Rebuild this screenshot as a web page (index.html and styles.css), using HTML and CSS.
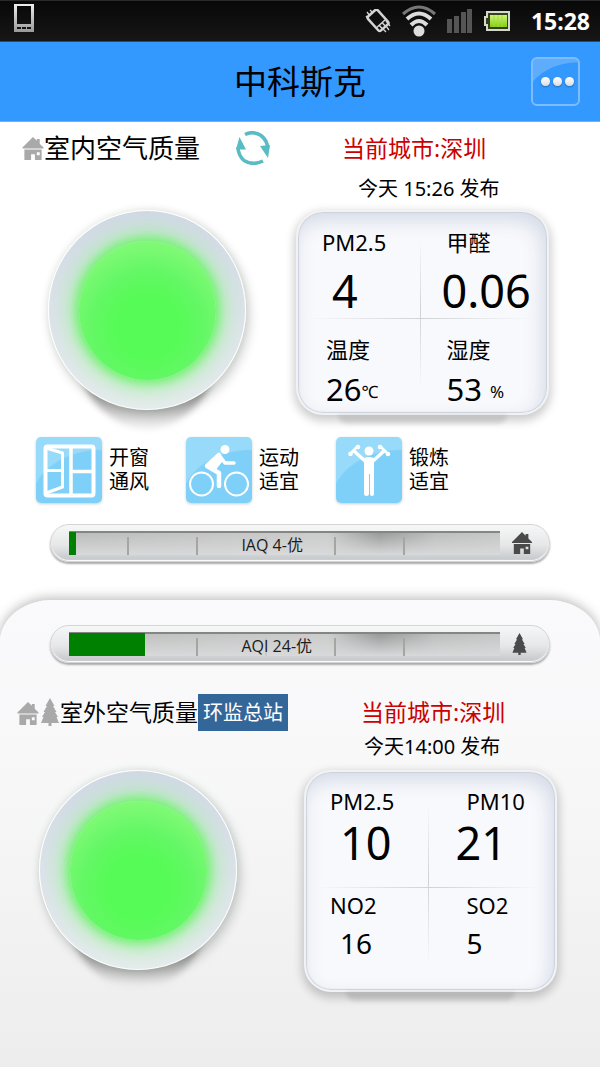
FILE: index.html
```html
<!DOCTYPE html>
<html lang="zh-CN">
<head>
<meta charset="utf-8">
<meta name="viewport" content="width=device-width, initial-scale=1">
<title>中科斯克</title>
<link rel="stylesheet" href="styles.css">
</head>
<body>
<svg class="defs" aria-hidden="true">
  <defs>
    <symbol id="house" viewBox="0 0 22 24">
      <path d="M11 0 15 4V2h3v5l4 4v1H0v-1zM2 13h18v11h-7v-6H9v6H2zM15 16v3h3v-3z" fill-rule="evenodd"/>
    </symbol>
    <symbol id="tree" viewBox="0 0 18 28">
      <path d="M9 0 13.500 8H12l3.500 6H14l3 5h-1.500L18 25h-7.500v3h-3v-3H0l2.500-6H1l3-5H2.500L6 8H4.500z"/>
    </symbol>
    <linearGradient id="silver" x1="0" y1="0" x2="0" y2="1">
      <stop offset="0" stop-color="#eee"/><stop offset="1" stop-color="#999"/>
    </linearGradient>
    <linearGradient id="lime" x1="0" y1="0" x2="0" y2="1">
      <stop offset="0" stop-color="#cdf37a"/><stop offset="1" stop-color="#83cd10"/>
    </linearGradient>
  </defs>
</svg>

<div class="status">
  <svg class="status-phone" width="20" height="28" viewBox="0 0 20 28"><path d="M0 0h20v28H0zM3 2v18h14V2zM3 23v2h4v-2zM8 23v2h4v-2zM13 23v2h4v-2z" fill="url(#silver)" fill-rule="evenodd"/></svg>
  <div class="status-right">
    <svg width="26" height="24" viewBox="0 0 26 24" fill="none" stroke="#d4d4d4"><g transform="rotate(-42 13 12)"><rect x="7" y="2" width="13" height="19" rx="2" stroke-width="2.500"/><path d="M7 16h13M11 16v5M15 16v5" stroke-width="1.500"/></g><path d="M1 7l4 5M2 3l3 4M5 1l3 3M25 17l-4-5M24 21l-3-4M21 23l-3-3" stroke-width="1.300"/></svg>
    <svg width="34" height="32" viewBox="0 0 34 32" fill="none" stroke-width="4"><path d="M1 9Q17-5 33 9" stroke="#777" stroke-width="3"/><path d="M5 14Q17 3 29 14" stroke="#ddd"/><path d="M9 20Q17 12 25 20" stroke="#ddd"/><circle cx="17" cy="26" r="5.500" fill="#ddd"/></svg>
    <svg width="26" height="24" viewBox="0 0 26 24" fill="#555"><path d="M0 10h5v14H0zM7 7h5v17H7zM14 3h5v21h-5zM20 0h5v24h-5z"/></svg>
    <svg width="26" height="20" viewBox="0 0 26 20"><path d="M0 5h2V0h24v20H2v-5H0z" fill="#d4d8cc"/><path d="M2 7h2V2h20v16H4v-5H2z" fill="#34401c"/><path d="M6 4h17v12H6z" fill="url(#lime)"/><path d="M10 4v12M14 4v12M18 4v12" stroke="#9fdc3c"/></svg>
    <time class="clock">15:28</time>
  </div>
</div>

<header class="bar">
  <h1 class="bar-title">中科斯克</h1>
  <button class="more" type="button" aria-label="更多"><span class="dot"></span><span class="dot"></span><span class="dot"></span></button>
</header>

<main>
  <section class="indoor">
    <div class="station">
      <div class="heading">
        <svg class="house" fill="#a9a9a9"><use href="#house"/></svg>
        <h2 class="heading-text">室内空气质量</h2>
        <button class="refresh" type="button" aria-label="刷新">
          <svg width="34" height="34" viewBox="0 0 34 34"><path d="M9 3.500Q17-.500 25 4.500Q32 10 31.500 18M27 30Q17 35 8 29.500Q2 24 2 16" fill="none" stroke="#58bcc4" stroke-width="3.500"/><path d="M24 15l10-1-2 13zM0 18.500 3.500 6 10 18.500z" fill="#58bcc4"/></svg>
        </button>
      </div>
      <p class="city">当前城市:深圳</p>
      <p class="published">今天 15:26 发布</p>
      <div class="dial"><div class="dial-face"><div class="dial-light"></div></div></div>
      <dl class="panel">
        <div class="cell"><dt>PM2.5</dt><dd class="big indent">4</dd></div>
        <div class="cell"><dt>甲醛</dt><dd class="big outdent">0.06</dd></div>
        <div class="cell shift"><dt>温度</dt><dd class="mid">26<small>℃</small></dd></div>
        <div class="cell"><dt>湿度</dt><dd class="mid">53<small class="percent">%</small></dd></div>
      </dl>
    </div>

    <ul class="advice">
      <li class="tip">
        <span class="tile"><svg width="66" height="66" viewBox="0 0 66 66" fill="none" stroke="#fff" stroke-width="4" stroke-linejoin="round"><rect x="9.500" y="9.500" width="48" height="49" rx="2"/><path d="M35 10v48M35 34.500h22" stroke-width="3.500"/><path d="M10 11 26.500 16v34L10 56M10 33.500h16" stroke-width="3"/></svg></span>
        <span>开窗<br>通风</span>
      </li>
      <li class="tip">
        <span class="tile"><svg width="66" height="66" viewBox="0 0 66 66" fill="none" stroke="#fff" stroke-linecap="round" stroke-linejoin="round"><circle cx="15.500" cy="47" r="11.500" stroke-width="2"/><circle cx="50.500" cy="47" r="11.500" stroke-width="2"/><circle cx="39" cy="12.500" r="4.500" fill="#fff" stroke="none"/><path d="M33 18 21 29l12 7v13" stroke-width="4.500"/><path d="M33 18l6 8h9" stroke-width="3.500"/><path d="M33 17 21 28l9 4 7-9z" fill="#fff" stroke-width="1"/></svg></span>
        <span>运动<br>适宜</span>
      </li>
      <li class="tip">
        <span class="tile"><svg width="66" height="66" viewBox="0 0 66 66" fill="#fff" stroke="#fff" stroke-linecap="round"><circle cx="33" cy="14" r="4.500" stroke="none"/><path d="M29 24 18 14M37 24l11-10" stroke-width="3.500" fill="none"/><path d="M14 17l8-8M44 9l8 8" stroke-width="2.500" fill="none"/><g stroke="none"><circle cx="14.500" cy="17" r="2.300"/><circle cx="22" cy="10" r="2.300"/><circle cx="44" cy="10" r="2.300"/><circle cx="52" cy="17" r="2.300"/><path d="M28 21q5-2 10 0v36q0 2-2 2-2 0-2-2V37h-1v20q0 2-2.500 2-2.500 0-2.500-2z"/></g></svg></span>
        <span>锻炼<br>适宜</span>
      </li>
    </ul>

    <div class="gauge">
      <div class="track" role="meter" aria-label="IAQ" aria-valuemin="0" aria-valuemax="250" aria-valuenow="4">
        <i class="tick"></i><i class="tick"></i><i class="tick"></i><i class="tick"></i><i class="tick"></i>
        <div class="fill" style="width:1.7%"></div>
        <span class="reading">IAQ 4-优</span>
      </div>
      <svg class="gauge-icon" fill="#4a4a4a"><use href="#house"/></svg>
    </div>
  </section>

  <section class="outdoor">
    <div class="gauge">
      <div class="track" role="meter" aria-label="AQI" aria-valuemin="0" aria-valuemax="136" aria-valuenow="24">
        <i class="tick"></i><i class="tick"></i><i class="tick"></i><i class="tick"></i><i class="tick"></i>
        <div class="fill" style="width:17.6%"></div>
        <span class="reading">AQI 24-优</span>
      </div>
      <svg class="gauge-icon gauge-tree" fill="#4a4a4a"><use href="#tree"/></svg>
    </div>

    <div class="station">
      <div class="heading">
        <svg class="house low" fill="#a9a9a9"><use href="#house"/></svg>
        <svg class="tree" fill="#a9a9a9"><use href="#tree"/></svg>
        <h2 class="heading-text">室外空气质量</h2>
        <button class="source" type="button">环监总站</button>
      </div>
      <p class="city">当前城市:深圳</p>
      <p class="published">今天14:00 发布</p>
      <div class="dial"><div class="dial-face"><div class="dial-light"></div></div></div>
      <dl class="panel">
        <div class="cell"><dt>PM2.5</dt><dd class="big indent">10</dd></div>
        <div class="cell"><dt>PM10</dt><dd class="big outdent">21</dd></div>
        <div class="cell"><dt>NO2</dt><dd class="mid indent">16</dd></div>
        <div class="cell"><dt>SO2</dt><dd class="mid">5</dd></div>
      </dl>
    </div>
  </section>
</main>
</body>
</html>
```
FILE: styles.css
```css
* { box-sizing: border-box; }
html { min-height: 100%; background: #fff; }
body {
  display: flex;
  flex-direction: column;
  min-height: 100vh;
  margin: 0;
  color: #000;
  font-family: "Noto Sans", "Noto Sans CJK SC", sans-serif;
  font-size: 20px;
}
h1, h2, p, dl, dd, ul { margin: 0; padding: 0; font-weight: 400; }
ul { list-style: none; }
button { padding: 0; border: 0; background: none; color: inherit; font: inherit; }
svg { display: block; flex: none; }
main { display: flex; flex: 1; flex-direction: column; }
.defs { position: absolute; width: 0; height: 0; }

/* system status bar */
.status {
  display: flex;
  align-items: center;
  justify-content: space-between;
  height: 42px;
  padding: 0 10px 0 14px;
  border-top: 1px solid #2a2a2a;
  border-bottom: 1px solid #444;
  background: linear-gradient(#080808, #161616);
}
.status-phone { margin-bottom: 6px; }
.status-right { display: flex; align-items: center; gap: 11px; }
.clock { margin-left: 10px; color: #fff; font-size: 23px; font-weight: 700; line-height: 30px; }

/* title bar */
.bar {
  display: grid;
  grid-template-columns: 1fr auto 1fr;
  align-items: center;
  height: 80px;
  padding: 0 20px;
  border-bottom: 1px solid #66b3ff;
  background: #39f;
}
.bar-title { grid-column: 2; font-size: 33px; line-height: 40px; }
.more {
  display: flex;
  align-items: center;
  justify-content: center;
  justify-self: end;
  gap: 3px;
  width: 49px;
  height: 49px;
  padding-left: 4px;
  border: 2px solid #7dbdff;
  border-radius: 6px;
  background: radial-gradient(ellipse 54px 42px at 100% 100%, #39f 98%, #5dadfc);
}
.dot { width: 9px; height: 9px; border-radius: 50%; background: linear-gradient(#fff, #ddd); box-shadow: 0 1px 2px #1d6fbe; }

/* station readout */
.station { display: grid; grid-template-columns: 49fr 51fr; grid-template-rows: 44px 36px auto; }
.heading { display: flex; align-items: center; height: 44px; padding-left: 22px; white-space: nowrap; }
.heading-text { font-size: 26px; line-height: 36px; }
.house { width: 22px; height: 23px; }
.tree { width: 18px; height: 28px; margin: 0 1px 0 2px; }
.refresh { margin-left: 36px; }
.source { height: 37px; padding: 0 5px; background: #369; color: #fff; font-size: 20px; line-height: 37px; }
.city { padding-left: 48px; color: #c00; font-size: 23px; line-height: 44px; }
.published { grid-column: 2; padding-left: 64px; line-height: 37px; }

.dial { position: relative; z-index: 0; justify-self: start; align-self: start; margin-left: 48px; }
.dial::before {
  content: "";
  position: absolute;
  z-index: -1;
  right: 26px;
  bottom: -19px;
  left: 26px;
  height: 120px;
  border-radius: 0 0 50% 50% / 0 0 75% 75%;
  background: linear-gradient(transparent 45%, #a5a5a5 68%, #ececec 97%);
  filter: blur(3px);
}
.dial-face {
  display: flex;
  align-items: center;
  justify-content: center;
  width: 198px;
  height: 200px;
  border: 1px solid #fff;
  border-radius: 50%;
  background: linear-gradient(#d2d8e7, #e9ebf1);
  box-shadow: 3px 5px 12px rgba(0, 0, 0, .2), 0 -2px 8px rgba(0, 0, 0, .05);
}
.dial-light {
  width: 137px;
  height: 139px;
  border-radius: 50%;
  background: radial-gradient(circle at 50% 62%, #57fb57 30%, #63f765 50%, #84fa78 80%);
  box-shadow: 0 0 10px 4px #74f274, 0 0 22px 13px rgba(170, 240, 170, .75);
}

.panel {
  position: relative;
  z-index: 0;
  display: grid;
  grid-template-columns: 1fr 1fr;
  border: 2px solid #f1f2f4;
  border-radius: 27px;
  background:
    linear-gradient(90deg, transparent 4%, #d0d2d6 50%, transparent 94%) 0 106px / 100% 1px no-repeat,
    linear-gradient(transparent 14%, #d0d2d6 50%, transparent 88%) 49% 0 / 1px 100% no-repeat,
    #f8f9fc;
  box-shadow: inset 0 0 1px 1px #cdd2dc, inset -4px 8px 20px #d3d9e6, 0 4px 10px 2px rgba(0, 0, 0, .2);
}
.panel::after {
  content: "";
  position: absolute;
  z-index: -1;
  right: 40px;
  bottom: -11px;
  left: 40px;
  height: 9px;
  border-radius: 0 0 10px 10px;
  background: rgba(0, 0, 0, .1);
  filter: blur(2px);
}
.cell { padding-left: 24px; white-space: nowrap; }
.cell dt { font-size: 22px; line-height: 32px; }
.big { font-size: 45px; line-height: 60px; }
.mid { font-size: 31px; line-height: 44px; }
.indent { padding-left: 10px; }
.outdent { margin-left: -5px; }
.mid small { font-size: 17px; line-height: 20px; vertical-align: 3px; }
.percent { margin-left: 8px; }

/* activity advice */
.advice { display: grid; grid-template-columns: repeat(4, 1fr); margin-top: 22px; }
.tip { display: flex; align-items: center; gap: 7px; padding-left: 36px; line-height: 24px; white-space: nowrap; }
.tile {
  border-radius: 5px;
  background: radial-gradient(ellipse 72px 54px at 100% 100%, #7ed0f8 97%, #98daf9);
  box-shadow: 0 1px 3px rgba(0, 0, 0, .2);
}

/* air quality gauges */
.gauge {
  display: flex;
  align-items: center;
  height: 38px;
  margin: 0 50px;
  padding: 0 18px;
  border: 1px solid #d5d5d5;
  border-radius: 19px;
  background: linear-gradient(#f6f7f7, #e6e7e8 55%, #c3c7ca);
  box-shadow: inset 0 -1px 1px #fff, 0 2px 2px #aaa;
}
.track {
  position: relative;
  display: grid;
  flex: 1;
  grid-template-columns: 14% repeat(4, 16%);
  height: 24px;
  border-top: 2px solid #858585;
  background: linear-gradient(rgba(210, 210, 210, 0), #d8d9da), linear-gradient(90deg, #bbb, #ccc 60%, #999 72%, #bdbdbd 85%, #c6c6c6);
}
.tick { margin: 4px 0 0; border-right: 2px solid #a5a5a2; }
.tick:nth-child(3) { opacity: .3; }
.fill { position: absolute; top: -1px; bottom: 0; left: 0; background: #008000; }
.reading {
  position: absolute;
  top: 0;
  left: 40%;
  color: #1c1c1c;
  font-family: "Open Sans", "Noto Sans CJK SC", sans-serif;
  font-size: 16px;
  line-height: 24px;
}
.gauge-icon { width: 20px; height: 22px; margin: 0 -1px 0 12px; }
.gauge-tree { width: 15px; margin-right: 4px; }

.indoor { padding: 4px 0 38px; }
.indoor .panel { grid-template-rows: 106px auto; margin: 4px 51px 0 2px; min-height: 205px; }
.indoor .cell { padding-top: 14px; }
.indoor .dial { margin-top: 4px; }
.indoor .big { line-height: 66px; }
.indoor .cell:nth-child(n + 3) { padding-top: 15px; }
.indoor .shift { padding-left: 28px; }
.indoor .advice { margin-bottom: 21px; }
.indoor .mid { line-height: 48px; }

.outdoor {
  flex: 1;
  padding: 25px 0 60px;
  border-radius: 52px 52px 0 0 / 42px 42px 0 0;
  background: linear-gradient(#fafafc, #f8f8f9 35%, #ededed);
  box-shadow: 0 -2px 12px rgba(0, 0, 0, .28);
}
.outdoor .station { grid-template-rows: 42px 28px auto; margin-top: 28px; }
.outdoor .heading { height: 42px; padding-left: 17px; }
.outdoor .heading-text { font-size: 23px; }
.outdoor .city { padding-left: 67px; line-height: 43px; }
.outdoor .published { padding-left: 70px; line-height: 28px; }
.outdoor .panel { grid-template-rows: 115px auto; margin: 9px 43px 0 10px; min-height: 222px; background-position: 0 115px, 49% 0, 0 0; }
.outdoor .cell { padding-top: 13px; }
.outdoor .cell:nth-child(even) { padding-left: 36px; }
.outdoor .cell:nth-child(n + 3) { padding-top: 2px; }
.outdoor .big { line-height: 52px; }
.outdoor .big.outdent { margin-left: -11px; }
.outdoor .mid { font-size: 28px; }
.outdoor .dial { margin: 9px 0 0 39px; }
.low { align-self: flex-end; margin-bottom: 8px; }
```
